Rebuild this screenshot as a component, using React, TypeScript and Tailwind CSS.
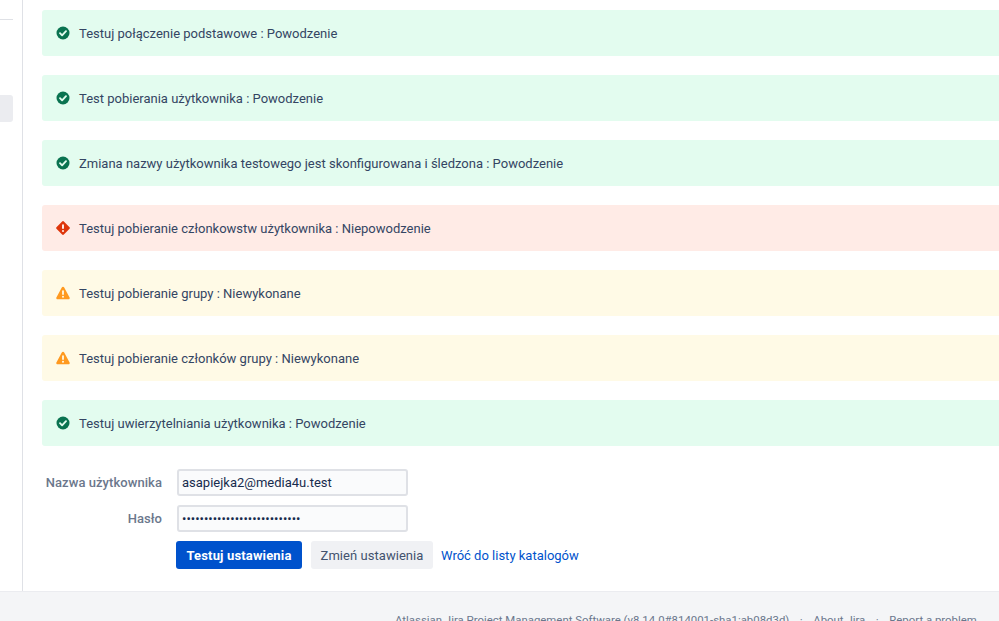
import React from "react";

const font = { fontFamily: "Roboto, 'Liberation Sans', sans-serif" };

function Ok() {
  return (
    <svg width="14" height="14" viewBox="0 0 14 14" className="shrink-0">
      <circle cx="7" cy="7" r="6.5" fill="#0a7350" />
      <path d="M4 7.2l2.1 2.1L10 5.2" fill="none" stroke="#e3fcef" strokeWidth="1.9" strokeLinecap="round" strokeLinejoin="round" />
    </svg>
  );
}
function Err() {
  return (
    <svg width="14" height="14" viewBox="0 0 14 14" className="shrink-0">
      <path d="M5.9.7a1.5 1.5 0 0 1 2.2 0l5.2 5.2a1.5 1.5 0 0 1 0 2.2l-5.2 5.2a1.5 1.5 0 0 1-2.2 0L.7 8.1a1.5 1.5 0 0 1 0-2.2z" fill="#de350b" />
      <rect x="6" y="3.2" width="2" height="4.8" rx="1" fill="#ffebe6" />
      <circle cx="7" cy="10" r="1.1" fill="#ffebe6" />
    </svg>
  );
}
function Warn() {
  return (
    <svg width="14" height="14" viewBox="0 0 14 14" className="shrink-0">
      <path d="M5.8 1.4a1.4 1.4 0 0 1 2.4 0l5.4 10a1.3 1.3 0 0 1-1.2 1.9H1.6a1.3 1.3 0 0 1-1.2-1.9z" fill="#ff991f" />
      <rect x="6.1" y="4.2" width="1.8" height="4.8" rx=".9" fill="#fffae6" />
      <circle cx="7" cy="10.8" r="1" fill="#fffae6" />
    </svg>
  );
}

type Kind = "ok" | "err" | "warn";
const rows: [Kind, string][] = [
  ["ok", "Testuj połączenie podstawowe : Powodzenie"],
  ["ok", "Test pobierania użytkownika : Powodzenie"],
  ["ok", "Zmiana nazwy użytkownika testowego jest skonfigurowana i śledzona : Powodzenie"],
  ["err", "Testuj pobieranie członkowstw użytkownika : Niepowodzenie"],
  ["warn", "Testuj pobieranie grupy : Niewykonane"],
  ["warn", "Testuj pobieranie członków grupy : Niewykonane"],
  ["ok", "Testuj uwierzytelniania użytkownika : Powodzenie"],
];

function Message({ kind, text }: { kind: Kind; text: string }) {
  const bg = kind === "ok" ? "bg-[#e3fcef]" : kind === "err" ? "bg-[#ffebe6]" : "bg-[#fffae6]";
  return (
    <div className={`${bg} h-[46px] rounded-[3px] flex items-center pl-[14px] gap-[9px] text-[13px] text-[#344563] mb-[19px]`}>
      {kind === "ok" ? <Ok /> : kind === "err" ? <Err /> : <Warn />}
      <span className="pt-px">{text}</span>
    </div>
  );
}

function Field({ label, value }: { label: string; value: string }) {
  return (
    <div className="flex items-center h-[27px]">
      <label className="w-[120px] text-right font-medium text-[13px] text-[#6b778c] whitespace-nowrap tracking-[0.06px]">{label}</label>
      <input
        readOnly
        type="text"
        value={value}
        className="ml-[15px] w-[231px] h-[27px] px-[3px] rounded-[3px] border-2 border-[#dfe1e6] bg-[#fafbfc] text-[13px] text-[#172b4d] outline-none"
        style={font}
      />
    </div>
  );
}

export default function App() {
  return (
    <div className="w-[999px] h-[621px] overflow-hidden bg-white flex flex-col" style={font}>
      <div className="flex h-[591px] shrink-0">
        <aside className="w-[23px] shrink-0 border-r border-[#dfe1e6] flex flex-col">
          <div className="h-[20px] w-[13px] border-b border-[#dfe1e6] shrink-0" />
          <div className="h-[27px] w-[13px] mt-[75px] bg-[#ebecf0] rounded-r-[3px]" />
        </aside>
        <main className="flex-1 min-w-0 pl-[19px] pt-[10px] -mr-[20px]">
          {rows.map(([kind, text]) => (
            <Message key={text} kind={kind} text={text} />
          ))}
          <div className="flex flex-col gap-[9px] pt-[4px]">
            <Field label="Nazwa użytkownika" value="asapiejka2@media4u.test" />
            <Field label="Hasło" value="•••••••••••••••••••••••••••" />
            <div className="flex items-center ml-[134px]">
              <button className="h-[28px] w-[126px] pt-px rounded-[3px] bg-[#0052cc] text-white text-[13px] font-bold tracking-[0.15px]">Testuj ustawienia</button>
              <button className="h-[28px] w-[122px] pt-px ml-[9px] rounded-[3px] bg-[#f0f1f4] text-[#42526e] text-[13px] tracking-[0.05px]">Zmień ustawienia</button>
              <a className="ml-[8px] pt-px text-[13px] text-[#0052cc]">Wróć do listy katalogów</a>
            </div>
          </div>
        </main>
      </div>
      <footer className="flex-1 bg-[#f4f5f7] border-t border-[#ebecf0] pl-[395px] pt-[20px] text-[11.4px] text-[#6b778c] whitespace-nowrap h-[30px]">
        <span>Atlassian Jira Project Management Software (v8.14.0#814001-sha1:ab08d3d)</span>
        <span className="mx-[10.5px]">·</span>
        <span>About Jira</span>
        <span className="mx-[10.5px]">·</span>
        <span>Report a problem</span>
      </footer>
    </div>
  );
}
